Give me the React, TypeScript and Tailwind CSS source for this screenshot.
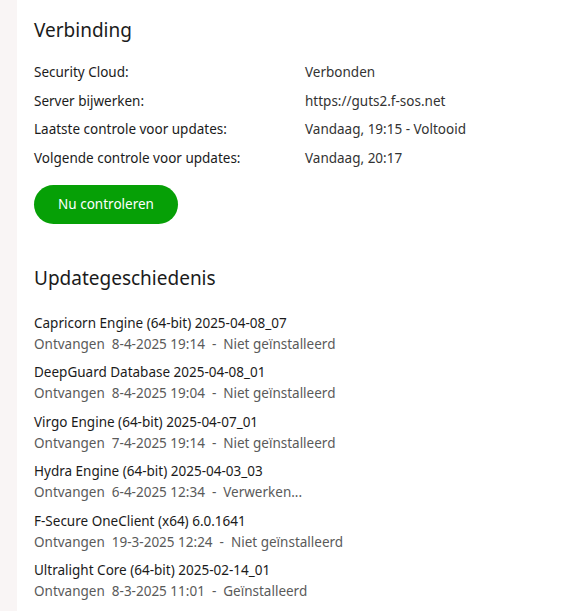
import React from "react";

const rows = [
  ["Security Cloud:", "Verbonden"],
  ["Server bijwerken:", "https://guts2.f-sos.net"],
  ["Laatste controle voor updates:", "Vandaag, 19:15 - Voltooid"],
  ["Volgende controle voor updates:", "Vandaag, 20:17"],
];

const history = [
  ["Capricorn Engine (64-bit) 2025-04-08_07", "8-4-2025 19:14", "Niet geïnstalleerd"],
  ["DeepGuard Database 2025-04-08_01", "8-4-2025 19:04", "Niet geïnstalleerd"],
  ["Virgo Engine (64-bit) 2025-04-07_01", "7-4-2025 19:14", "Niet geïnstalleerd"],
  ["Hydra Engine (64-bit) 2025-04-03_03", "6-4-2025 12:34", "Verwerken..."],
  ["F-Secure OneClient (x64) 6.0.1641", "19-3-2025 12:24", "Niet geïnstalleerd"],
  ["Ultralight Core (64-bit) 2025-02-14_01", "8-3-2025 11:01", "Geïnstalleerd"],
];

export default function App() {
  return (
    <div
      className="flex h-[611px] w-[564px] overflow-hidden bg-white text-[#1b1b1b]"
      style={{ fontFamily: '"Noto Sans", "Open Sans", sans-serif' }}
    >
      <div className="w-[17px] shrink-0 bg-[#f9f5f5]" />
      <div className="flex-1 pl-[17px] pt-[15px]">
        <h2 className="text-[19px] leading-[30px]">Verbinding</h2>
        <div className="mt-[13px] flex flex-col">
          {rows.map(([k, v]) => (
            <div key={k} className="flex h-[28.5px] items-center text-[13.5px]">
              <span className="w-[271px]">{k}</span>
              <span className="text-[#333]">{v}</span>
            </div>
          ))}
        </div>
        <button className="mt-[13px] h-[39px] w-[144px] rounded-full bg-[#06a006] text-[13.5px] font-normal text-white">
          Nu controleren
        </button>
        <h2 className="mt-[39px] text-[19px] leading-[30px]">Updategeschiedenis</h2>
        <div className="mt-[20px] flex flex-col">
          {history.map(([t, d, s]) => (
            <div key={t} className="flex h-[49.4px] flex-col text-[13.5px]">
              <span className="leading-[21px]">{t}</span>
              <span className="leading-[21px] text-[#5a5a5a] whitespace-pre">
                {"Ontvangen  " + d + "  -  " + s}
              </span>
            </div>
          ))}
        </div>
      </div>
    </div>
  );
}
